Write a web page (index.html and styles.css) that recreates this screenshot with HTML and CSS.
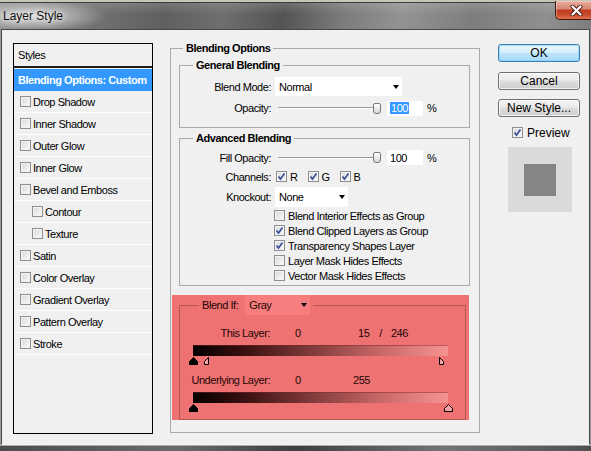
FILE: index.html
```html
<!DOCTYPE html>
<html>
<head>
<meta charset="utf-8">
<title>Layer Style</title>
<link rel="stylesheet" href="styles.css">
</head>
<body>
<div class="window">
  <div class="titlebar">
    <span class="title">Layer Style</span>
    <div class="close">
      <svg width="13" height="11" viewBox="0 0 13 11"><path d="M2.5 1.5 L10.5 9.5 M10.5 1.5 L2.5 9.5" stroke="#4a1a12" stroke-width="4" stroke-linecap="round"/><path d="M2.5 1.5 L10.5 9.5 M10.5 1.5 L2.5 9.5" stroke="#ffffff" stroke-width="2.2" stroke-linecap="round"/></svg>
    </div>
  </div>
  <div class="client">
    <div class="styles-panel">
      <div class="sp-head">Styles</div>
      <div class="sp-item sel">Blending Options: Custom</div>
      <div class="sp-item"><span class="cb"></span><span>Drop Shadow</span></div>
      <div class="sp-item"><span class="cb"></span><span>Inner Shadow</span></div>
      <div class="sp-item"><span class="cb"></span><span>Outer Glow</span></div>
      <div class="sp-item"><span class="cb"></span><span>Inner Glow</span></div>
      <div class="sp-item"><span class="cb"></span><span>Bevel and Emboss</span></div>
      <div class="sp-item sub"><span class="cb"></span><span>Contour</span></div>
      <div class="sp-item sub"><span class="cb"></span><span>Texture</span></div>
      <div class="sp-item"><span class="cb"></span><span>Satin</span></div>
      <div class="sp-item"><span class="cb"></span><span>Color Overlay</span></div>
      <div class="sp-item"><span class="cb"></span><span>Gradient Overlay</span></div>
      <div class="sp-item"><span class="cb"></span><span>Pattern Overlay</span></div>
      <div class="sp-item"><span class="cb"></span><span>Stroke</span></div>
    </div>

    <div class="main">
      <fieldset class="group outer">
        <legend class="outer-legend">Blending Options</legend>

        <fieldset class="group general">
          <legend class="sub-legend">General Blending</legend>
          <div class="row row-mode">
            <span class="lbl">Blend Mode:</span>
            <div class="select sel-mode"><span>Normal</span><span class="arrow"></span></div>
          </div>
          <div class="row row-opacity">
            <span class="lbl">Opacity:</span>
            <div class="slider"><span class="track"></span><span class="thumb"></span></div>
            <div class="num"><span class="hl">100</span></div>
            <span class="pct">%</span>
          </div>
        </fieldset>

        <fieldset class="group advanced">
          <legend class="sub-legend">Advanced Blending</legend>
          <div class="row row-fill">
            <span class="lbl">Fill Opacity:</span>
            <div class="slider"><span class="track"></span><span class="thumb"></span></div>
            <div class="num"><span>100</span></div>
            <span class="pct">%</span>
          </div>
          <div class="row row-ch">
            <span class="lbl">Channels:</span>
            <div class="chs">
              <span class="ch"><span class="cb"><svg width="9" height="9" viewBox="0 0 9 9"><path d="M1.5 4.5 L3.5 7 L7.5 1.5" fill="none" stroke="#3d4f9e" stroke-width="1.7"/></svg></span>R</span>
              <span class="ch"><span class="cb"><svg width="9" height="9" viewBox="0 0 9 9"><path d="M1.5 4.5 L3.5 7 L7.5 1.5" fill="none" stroke="#3d4f9e" stroke-width="1.7"/></svg></span>G</span>
              <span class="ch"><span class="cb"><svg width="9" height="9" viewBox="0 0 9 9"><path d="M1.5 4.5 L3.5 7 L7.5 1.5" fill="none" stroke="#3d4f9e" stroke-width="1.7"/></svg></span>B</span>
            </div>
          </div>
          <div class="row row-ko">
            <span class="lbl">Knockout:</span>
            <div class="select sel-ko"><span>None</span><span class="arrow"></span></div>
          </div>
          <div class="opts">
            <div class="opt"><span class="cb"></span><span>Blend Interior Effects as Group</span></div>
            <div class="opt"><span class="cb"><svg width="9" height="9" viewBox="0 0 9 9"><path d="M1.5 4.5 L3.5 7 L7.5 1.5" fill="none" stroke="#3d4f9e" stroke-width="1.7"/></svg></span><span>Blend Clipped Layers as Group</span></div>
            <div class="opt"><span class="cb"><svg width="9" height="9" viewBox="0 0 9 9"><path d="M1.5 4.5 L3.5 7 L7.5 1.5" fill="none" stroke="#3d4f9e" stroke-width="1.7"/></svg></span><span>Transparency Shapes Layer</span></div>
            <div class="opt"><span class="cb"></span><span>Layer Mask Hides Effects</span></div>
            <div class="opt"><span class="cb"></span><span>Vector Mask Hides Effects</span></div>
          </div>
        </fieldset>

        <div class="blendif">
          <fieldset class="group bi-group">
            <legend class="bi-legend"><span>Blend If:</span><span class="select sel-gray"><span>Gray</span><span class="arrow"></span></span></legend>
            <div class="row bi-row bi-this">
              <span class="bi-lbl">This Layer:</span>
              <span class="v0">0</span>
              <span>15</span><span class="slash">/</span><span class="v246">246</span>
            </div>
            <div class="bar bar1"></div>
            <div class="markers">
              <svg class="mk" style="left:-4px" width="9" height="8" viewBox="0 0 9 8"><path d="M4.5 0.5 L8.5 4.5 L8.5 7.5 L0.5 7.5 L0.5 4.5 Z" fill="#000" stroke="#000"/></svg>
              <svg class="mk" style="left:11px" width="9" height="8" viewBox="0 0 9 8"><path d="M4.5 0.5 L4.5 7.5 L0.5 7.5 L0.5 4.5 Z" fill="#f6a3a3" stroke="#000" stroke-linejoin="round"/></svg>
              <svg class="mk" style="left:242px" width="9" height="8" viewBox="0 0 9 8"><path d="M4.5 0.5 L8.5 4.5 L8.5 7.5 L4.5 7.5 Z" fill="#f6a3a3" stroke="#000" stroke-linejoin="round"/></svg>
            </div>
            <div class="row bi-row bi-under">
              <span class="bi-lbl">Underlying Layer:</span>
              <span class="v0u">0</span>
              <span>255</span>
            </div>
            <div class="bar bar2"></div>
            <div class="markers">
              <svg class="mk" style="left:-4px" width="9" height="8" viewBox="0 0 9 8"><path d="M4.5 0.5 L8.5 4.5 L8.5 7.5 L0.5 7.5 L0.5 4.5 Z" fill="#000" stroke="#000"/></svg>
              <svg class="mk" style="left:251px" width="9" height="8" viewBox="0 0 9 8"><path d="M4.5 0.5 L8.5 4.5 L8.5 7.5 L0.5 7.5 L0.5 4.5 Z" fill="#f6a3a3" stroke="#000" stroke-linejoin="round"/></svg>
            </div>
          </fieldset>
        </div>
      </fieldset>
    </div>

    <div class="side">
      <div class="btn btn-default">OK</div>
      <div class="btn btn-cancel">Cancel</div>
      <div class="btn btn-new">New Style...</div>
      <div class="preview-row"><span class="cb"><svg width="9" height="9" viewBox="0 0 9 9"><path d="M1.5 4.5 L3.5 7 L7.5 1.5" fill="none" stroke="#3d4f9e" stroke-width="1.7"/></svg></span><span>Preview</span></div>
      <div class="swatch"><div class="swatch-inner"></div></div>
    </div>
  </div>
  <div class="frame-bottom"></div>
</div>
</body>
</html>
```
FILE: styles.css
```css
* { box-sizing: border-box; }
html, body { margin: 0; padding: 0; }
body {
  width: 591px; height: 451px; overflow: hidden;
  font-family: "Liberation Sans", Arial, sans-serif;
  font-size: 11px; letter-spacing: -0.45px; color: #000;
  background: #9a9a9a;
}
.window {
  width: 591px; height: 451px; overflow: hidden;
  display: flex; flex-direction: column;
  background: #9c9c9c;
}

/* title bar */
.titlebar {
  flex: none; height: 29px;
  display: flex; justify-content: space-between; align-items: flex-start;
  background:
    linear-gradient(to bottom, #c6c6b6 0, #c6c6b6 2px, #3c3c3c 2px, #3c3c3c 3px, rgba(255,255,255,0.14) 3px, rgba(255,255,255,0) 14px),
    radial-gradient(ellipse 75px 16px at 32px 16px, rgba(225,225,225,0.95), rgba(225,225,225,0)),
    linear-gradient(100deg, #8a8a8a 0%, #767676 14%, #5f5f5f 28%, #6e6e6e 38%, #545454 48%, #7b7b7b 58%, #939393 68%, #7d7d7d 80%, #8f8f8f 92%, #7e7e7e 100%);
}
.title {
  margin: 9px 0 0 3px; line-height: 14px;
  font-size: 12px; letter-spacing: 0; color: #111;
  text-shadow: 0 0 4px rgba(255,255,255,0.9), 0 0 9px rgba(255,255,255,0.7);
}
.close {
  width: 36px; height: 19px; margin-top: 1px;
  border-left: 1px solid #3b1610; border-bottom: 1px solid #3b1610;
  border-radius: 0 0 0 5px;
  background: linear-gradient(#eaab9c 0%, #d98a78 42%, #c23c22 52%, #c84a2c 75%, #e0724e 100%);
  box-shadow: inset 1px 1px 0 rgba(255,255,255,0.35);
  display: flex; align-items: center; padding-left: 14px;
}
.close svg { display: block; }

/* client */
.client {
  flex: none; height: 416px; margin: 0 1px;
  border: 1px solid #474747; border-bottom: 1px solid #f8f8f8;
  background: #f0f0f0;
  display: flex; align-items: flex-start;
}
.frame-bottom {
  flex: 1;
  border-top: 1px solid #a8a8a8;
  background: linear-gradient(to right, #4c4c4c, #6a6a6a 30%, #3f3f3f 50%, #747474 75%, #505050);
}

/* checkbox */
.cb {
  flex: none; width: 11px; height: 11px;
  border: 1px solid #8f8f8f;
  background: linear-gradient(135deg, #d8d8d8, #fbfbfb);
  box-shadow: inset 0 0 0 1px #f3f3f3;
  display: flex; align-items: center; justify-content: center;
}
.cb svg { display: block; }

/* styles list */
.styles-panel {
  flex: none; width: 140px; height: 391px;
  margin: 13px 0 0 11px;
  border: 1px solid #000; background: #f0f0f0;
}
.sp-head {
  height: 24px; border-bottom: 2px solid #1c1c1c;
  padding-left: 4px; line-height: 22px;
}
.sp-item {
  height: 22px; border-bottom: 1px solid #fff;
  display: flex; align-items: center; gap: 2px; padding-left: 6px;
}
.sp-item.sel {
  margin-top: 1px; border-bottom: none;
  background: #3399ff; color: #fff;
  font-weight: bold;
  padding-left: 4px;
}
.sp-item.sub { padding-left: 18px; }

/* main groups */
.main { flex: none; width: 310px; margin: 12px 0 0 17px; }
.group {
  margin: 0; padding: 0; min-width: 0;
  border: 1px solid #a9a9a9;
}
legend {
  padding: 0 3px;
  font-weight: bold;
  line-height: 13px;
}
.group.outer { height: 391px; }
.outer-legend { margin-left: 12px; }
.sub-legend { margin-left: 13px; }
.group.general { margin: 4px 9px 0 8px; height: 69px; }
.group.advanced { margin: 4px 9px 0 8px; height: 154px; }

.row { display: flex; align-items: center; }
.lbl { flex: none; width: 91px; text-align: right; }

.select {
  flex: none;
  display: flex; align-items: center; justify-content: space-between;
  background: #fff; padding: 0 3px 0 4px;
}
.arrow {
  width: 0; height: 0;
  border-left: 3.5px solid transparent; border-right: 3.5px solid transparent;
  border-top: 4px solid #000;
}
.row-mode { margin-top: 5px; height: 19px; }
.sel-mode { margin-left: 4px; width: 127px; height: 19px; }

.row-opacity { margin-top: 4px; height: 16px; }
.slider { flex: none; width: 103px; margin-left: 7px; display: flex; align-items: center; }
.track {
  flex: 1; height: 2px;
  background: linear-gradient(#9a9a9a 50%, #ffffff 50%);
}
.thumb {
  flex: none; width: 8px; height: 11px;
  border: 1px solid #7a7a7a; border-radius: 2px 2px 3px 3px;
  background: linear-gradient(#ffffff, #d6d6d6);
}
.num {
  flex: none; width: 36px; height: 15px; margin-left: 6px;
  background: #fff; padding-left: 3px;
  display: flex; align-items: center;
}
.hl { background: #3399ff; color: #fff; padding: 0 1px; line-height: 12px; }
.pct { margin-left: 4px; }

.row-fill { margin-top: 5px; height: 15px; }
.row-ch { margin-top: 4px; height: 15px; }
.chs { display: flex; gap: 10px; margin-left: 5px; }
.ch { display: flex; align-items: center; gap: 3px; }
.row-ko { margin-top: 3px; height: 20px; }
.sel-ko { margin-left: 4px; width: 73px; height: 20px; }

.opts { margin-top: 1px; padding-left: 94px; }
.opt { height: 15px; display: flex; align-items: center; gap: 3px; }

/* blend if */
.blendif {
  margin: 11px 0 0 1px; width: 297px; height: 125px;
  background: #ee7272; color: #1e0606;
}
.group.bi-group {
  margin: -2px 3px 0 7px; height: 125px;
  border-color: #b85555;
}
.bi-legend {
  display: flex; align-items: center; height: 20px;
  margin-left: 19px; font-weight: normal;
}
.sel-gray { margin-left: 7px; width: 65px; height: 20px; background: #f67e7e; }
.bi-row { height: 13px; }
.bi-this { margin-top: 11px; }
.bi-under { margin-top: 8px; }
.bi-lbl { flex: none; width: 90px; text-align: right; }
.v0 { flex: none; width: 63px; margin-left: 25px; }
.slash { margin-left: 10px; }
.v246 { margin-left: 9px; }
.v0u { flex: none; width: 58px; margin-left: 25px; }

.bar {
  margin-left: 13px; width: 255px; height: 11px;
  border-top: 1px solid rgba(120,40,40,0.5);
  background: linear-gradient(to right, #050000 0%, #3a1010 20%, #8a4040 50%, #cc6a6a 75%, #f59393 100%);
}
.bar1 { margin-top: 6px; }
.bar2 { margin-top: 6px; }
.markers { position: relative; margin-left: 13px; width: 255px; height: 9px; }
.mk { position: absolute; top: 1px; display: block; }

/* side */
.side { flex: none; width: 82px; margin: 14px 0 0 18px; display: flex; flex-direction: column; }
.btn {
  height: 18px; width: 82px;
  border: 1px solid #707070; border-radius: 3px;
  background: linear-gradient(#f2f2f2 0%, #ebebeb 45%, #dddddd 50%, #cfcfcf 100%);
  box-shadow: inset 0 0 0 1px rgba(255,255,255,0.7);
  display: flex; align-items: center; justify-content: center;
  font-size: 12px; letter-spacing: 0;
}
.btn-default {
  border-color: #3c7fb1;
  background: linear-gradient(#eaf6fd 0%, #d9f0fc 45%, #bee6fd 50%, #a7d9f5 100%);
  box-shadow: inset 0 0 0 1px rgba(120,210,250,0.6);
}
.btn-cancel { margin-top: 10px; }
.btn-new { margin-top: 9px; }
.preview-row {
  margin-top: 10px; height: 11px; padding-left: 14px;
  display: flex; align-items: center; gap: 4px;
  font-size: 12px; letter-spacing: 0;
}
.swatch {
  margin: 9px 0 0 10px; width: 64px; height: 65px;
  background: #dadada;
  display: flex; align-items: center; justify-content: center;
}
.swatch-inner { width: 32px; height: 32px; background: #858585; }
```
